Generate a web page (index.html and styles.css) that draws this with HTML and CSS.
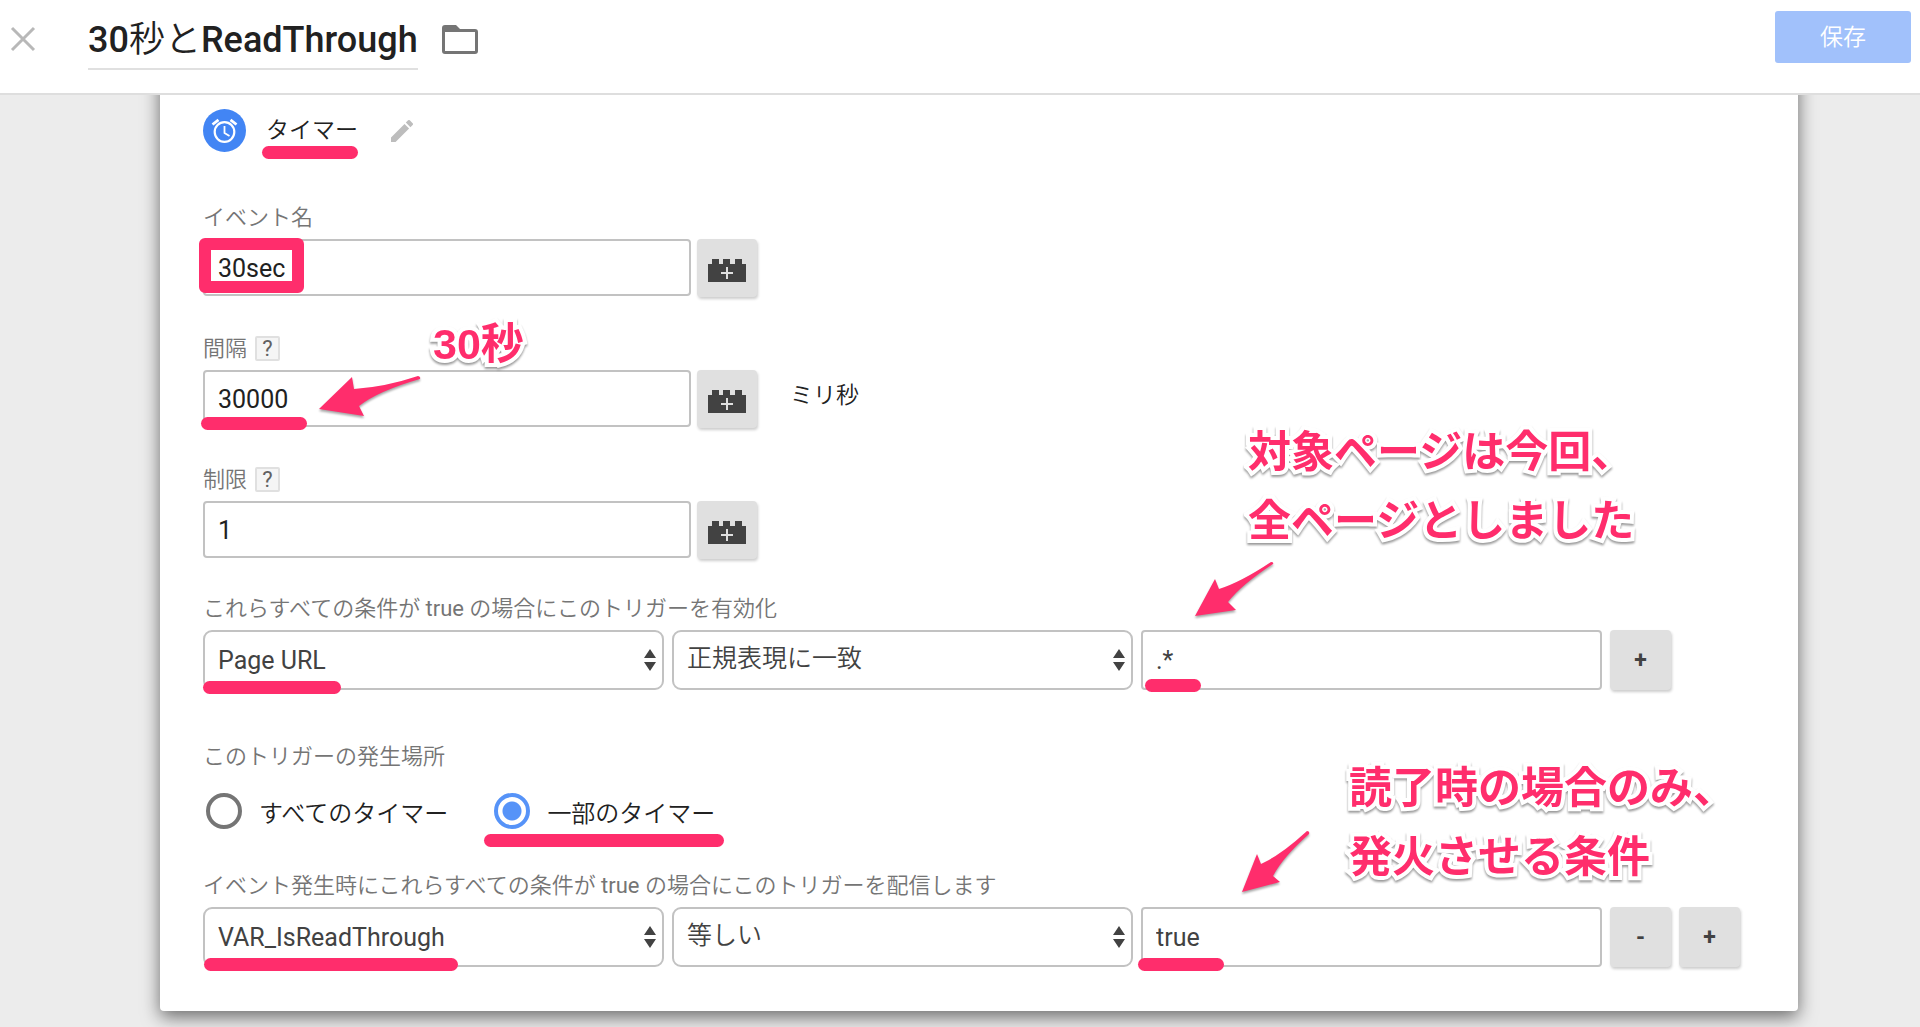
FILE: index.html
```html
<!DOCTYPE html>
<html lang="ja">
<head>
<meta charset="utf-8">
<meta name="viewport" content="width=device-width, initial-scale=1">
<title>30秒とReadThrough</title>
<link rel="stylesheet" href="styles.css">
</head>
<body>
<svg class="defs" aria-hidden="true">
  <symbol id="brick" viewBox="0 0 38 23"><path fill="#424242" d="M0 5h4V0h7v5h4V0h7v5h5V0h7v5h4v18H0z"/><path stroke="#e0e0e0" stroke-width="2" d="M19 8v12M13 14h12"/></symbol>
  <symbol id="updown" viewBox="0 0 12 22"><path fill="#424242" d="M6 0l6 9H0zM6 22l6-9H0z"/></symbol>
</svg>

<header class="topbar">
  <button class="icon-button close" type="button" aria-label="閉じる">
    <svg width="26" height="26" viewBox="0 0 26 26"><path d="M2 2l22 22M24 2L2 24" stroke="#b8b8b8" stroke-width="3" fill="none"/></svg>
  </button>
  <h1 class="title">30<span class="kana">秒と</span>ReadThrough</h1>
  <button class="icon-button" type="button" aria-label="フォルダ">
    <svg width="36" height="29" viewBox="0 0 36 29"><path fill="#757575" fill-rule="evenodd" d="M3 0h11l4 4h15a3 3 0 0 1 3 3v19a3 3 0 0 1-3 3H3a3 3 0 0 1-3-3V3a3 3 0 0 1 3-3zm0 7v19h30V7z"/></svg>
  </button>
  <button class="save" type="button">保存</button>
</header>

<main class="card">
  <div class="type">
    <svg width="43" height="43" viewBox="0 0 43 43" aria-hidden="true">
      <circle cx="21.500" cy="21.500" r="21.500" fill="#4285f4"/>
      <g fill="none" stroke="#fff"><circle cx="21.500" cy="23" r="9.800" stroke-width="2.200"/><path stroke-width="1.800" d="M21.500 17v7l5 3"/><path stroke-width="2.800" d="M9.500 15.500l6-4.700M33.500 15.500l-6-4.700"/></g>
    </svg>
    <span class="type-name">タイマー<i class="mark mark-type"></i></span>
    <button class="icon-button" type="button" aria-label="編集">
      <svg width="22" height="22" viewBox="3 3 18 18"><path fill="#bdbdbd" d="M3 17.250V21h3.750L17.810 9.940l-3.750-3.750L3 17.250zM20.710 7.040a1 1 0 0 0 0-1.410l-2.340-2.340a1 1 0 0 0-1.410 0l-1.830 1.830 3.750 3.750 1.830-1.830z"/></svg>
    </button>
  </div>

  <div class="fields">
    <div class="field">
      <div class="caption"><label for="event">イベント名</label></div>
      <div class="line">
        <input class="box" id="event" type="text" value="30sec">
        <button class="gray brick" type="button" aria-label="変数を挿入"><svg width="38" height="23"><use href="#brick"/></svg></button>
        <i class="frame"></i>
      </div>
    </div>

    <div class="field">
      <div class="caption"><label for="interval">間隔</label><button class="help" type="button">?</button></div>
      <div class="line">
        <input class="box" id="interval" type="text" value="30000">
        <button class="gray brick" type="button" aria-label="変数を挿入"><svg width="38" height="23"><use href="#brick"/></svg></button>
        <span class="unit">ミリ秒</span>
        <i class="mark mark-interval"></i>
        <svg class="arrow arrow-interval" width="106" height="46" viewBox="317 373 106 46" aria-hidden="true"><path d="M319 409L352 377L354 389Q385 387 418 376Q421 377 420 379Q378 391 359 406L364 416Z"/></svg>
        <strong class="note note-interval">30秒</strong>
      </div>
    </div>

    <div class="field">
      <div class="caption"><label for="limit">制限</label><button class="help" type="button">?</button></div>
      <div class="line">
        <input class="box" id="limit" type="text" value="1">
        <button class="gray brick" type="button" aria-label="変数を挿入"><svg width="38" height="23"><use href="#brick"/></svg></button>
      </div>
    </div>
  </div>

  <div class="caption"><span>これらすべての条件が <span class="latin">true</span> の場合にこのトリガーを有効化</span></div>
  <div class="rule">
    <div class="cell"><select class="box" aria-label="変数"><option>Page URL</option></select><svg class="updown"><use href="#updown"/></svg><i class="mark mark-url"></i></div>
    <div class="cell"><select class="box operator" aria-label="演算子"><option>正規表現に一致</option></select><svg class="updown"><use href="#updown"/></svg></div>
    <div class="cell">
      <input class="box" type="text" value=".*" aria-label="値">
      <i class="mark mark-regex"></i>
      <svg class="arrow arrow-regex" width="82" height="60" viewBox="1192 561 82 60" aria-hidden="true"><path d="M1194 617L1214 580L1218 590Q1240 583 1270 563Q1273 563 1272 565Q1240 586 1227 603L1235 611Z"/></svg>
      <strong class="note note-regex">対象ページは今回、<br>全ページとしました</strong>
    </div>
    <button class="gray" type="button">+</button>
  </div>

  <div class="caption where">このトリガーの発生場所</div>
  <div class="choices">
    <label class="choice"><input type="radio" name="where">すべてのタイマー</label>
    <label class="choice"><input type="radio" name="where" checked>一部のタイマー<i class="mark mark-choice"></i></label>
  </div>

  <div class="caption"><span>イベント発生時にこれらすべての条件が <span class="latin">true</span> の場合にこのトリガーを配信します</span></div>
  <div class="rule">
    <div class="cell"><select class="box" aria-label="変数"><option>VAR_IsReadThrough</option></select><svg class="updown"><use href="#updown"/></svg><i class="mark mark-var"></i></div>
    <div class="cell"><select class="box operator" aria-label="演算子"><option>等しい</option></select><svg class="updown"><use href="#updown"/></svg></div>
    <div class="cell">
      <input class="box" type="text" value="true" aria-label="値">
      <i class="mark mark-true"></i>
      <svg class="arrow arrow-true" width="72" height="66" viewBox="1240 829 72 66" aria-hidden="true"><path d="M1242 892L1257 854L1261 864Q1281 855 1307 831Q1310 831 1309 834Q1283 857 1273 876L1280 882Z"/></svg>
      <strong class="note note-true">読了時の場合のみ、<br>発火させる条件</strong>
    </div>
    <button class="gray" type="button">-</button>
    <button class="gray" type="button">+</button>
  </div>
</main>
</body>
</html>
```

FILE: styles.css
```css
* { box-sizing: border-box; }

body {
  margin: 0;
  background: #ececec;
  color: #212121;
  font-family: Roboto, "Noto Sans CJK JP", sans-serif;
  font-size: 23px;
}

button, input, select { font: inherit; color: inherit; margin: 0; }

.defs { position: absolute; width: 0; height: 0; }

.icon-button {
  display: flex;
  padding: 0;
  border: 0;
  background: none;
}

/* Top bar */
.topbar {
  position: relative;
  z-index: 1;
  display: flex;
  align-items: center;
  padding: 8px 9px 23px 10px;
  background: #fff;
  border-bottom: 2px solid #dedede;
}

.title {
  margin: 0 24px 0 52px;
  padding-top: 4px;
  border-bottom: 2px solid #e0e0e0;
  font-size: 36px;
  font-weight: 500;
  line-height: 56px;
  white-space: nowrap;
}

.kana { font-weight: 350; }

.save {
  align-self: flex-start;
  width: 136px;
  height: 52px;
  margin: 3px 0 0 auto;
  padding: 0 0 4px;
  border: 0;
  border-radius: 3px;
  background: #a1c1fb;
  color: #fff;
  font-weight: 350;
}

/* Card: its top edge is tucked under the top bar */
.card {
  margin: -30px 122px 16px 160px;
  padding: 44px 58px 44px 43px;
  background: #fff;
  border-radius: 4px;
  box-shadow: 0 6px 18px rgba(0, 0, 0, .55);
}

.type {
  display: flex;
  align-items: center;
  margin-bottom: 49px;
}

.type-name {
  position: relative;
  margin: 0 33px 0 20px;
  padding-bottom: 5px;
  font-weight: 350;
}

.caption {
  display: flex;
  align-items: center;
  gap: 8px;
  height: 30px;
  margin-bottom: 8px;
  padding-bottom: 3px;
  color: #757575;
  font-size: 22px;
  font-weight: 350;
  white-space: nowrap;
}

.latin { font-weight: 400; }

.help {
  width: 25px;
  height: 25px;
  margin-top: 6px;
  padding: 0;
  border: 2px solid #e0e0e0;
  border-radius: 2px;
  background: #f5f5f5;
  color: #616161;
  font-size: 22px;
  font-weight: 400;
  line-height: 22px;
}

.fields {
  display: grid;
  gap: 35px;
  margin-bottom: 33px;
}

.line {
  position: relative;
  display: flex;
  gap: 6px;
}

.box {
  width: 100%;
  height: 60px;
  padding: 0 13px;
  border: 2px solid #c2c2c2;
  border-radius: 4px;
  background: #fff;
  color: #424242;
  font-size: 25px;
}

.line .box {
  width: 488px;
  height: 57px;
  padding-top: 2px;
  color: #212121;
}

select.box {
  appearance: none;
  border-radius: 9px;
}

select.operator {
  padding-bottom: 4px;
  font-weight: 350;
}

.gray {
  height: 60px;
  padding: 0;
  border: 0;
  border-radius: 4px;
  background: #e0e0e0;
  box-shadow: 1px 2px 3px rgba(0, 0, 0, .2);
  color: #424242;
  font-weight: 700;
}

.brick {
  display: flex;
  align-items: center;
  justify-content: center;
  width: 60px;
  height: 58px;
  padding-top: 5px;
}

.unit {
  margin-left: 27px;
  line-height: 52px;
  font-weight: 350;
}

.rule {
  display: grid;
  grid-template-columns: repeat(3, 1fr) 61px 61px;
  gap: 8px;
}

.cell { position: relative; }

.updown {
  position: absolute;
  right: 8px;
  top: 19px;
  width: 12px;
  height: 22px;
  pointer-events: none;
}

.where { margin: 50px 0 23px; }

.choices {
  display: flex;
  gap: 46px;
  margin: 0 0 40px 3px;
}

.choice {
  position: relative;
  display: flex;
  align-items: center;
  gap: 17px;
  height: 36px;
  font-size: 24px;
  font-weight: 350;
}

.choice input {
  appearance: none;
  width: 36px;
  height: 36px;
  border: 4px solid #757575;
  border-radius: 50%;
}

.choice input:checked {
  border-color: #5693f8;
  background: radial-gradient(circle, #5693f8 9px, transparent 10px);
}

/* Hand-drawn style annotations laid over the form */
.mark {
  position: absolute;
  height: 13px;
  border-radius: 7px;
  background: #ff2d6c;
}

.mark-type { left: -4px; right: 0; top: 35px; }
.mark-interval { left: -2px; top: 47px; width: 106px; }
.mark-url { left: 0; top: 51px; width: 138px; }
.mark-regex { left: 4px; top: 49px; width: 56px; }
.mark-choice { left: -10px; right: -9px; top: 41px; }
.mark-var { left: 1px; top: 51px; width: 254px; }
.mark-true { left: -3px; top: 51px; width: 86px; }

.frame {
  position: absolute;
  left: -4px;
  top: -1px;
  width: 105px;
  height: 55px;
  border: 12px solid #ff2d6c;
  border-radius: 6px;
}

.arrow {
  position: absolute;
  fill: #ff2d6c;
  filter: drop-shadow(0 2px 1px rgba(0, 0, 0, .35));
  overflow: visible;
}

.arrow-interval { left: 114px; top: 3px; }
.arrow-regex { left: 52px; top: -70px; }
.arrow-true { left: 99px; top: -78px; }

.note {
  position: absolute;
  color: #ff2d6c;
  font-family: "Liberation Sans", "Noto Sans CJK JP", sans-serif;
  font-size: 43px;
  font-weight: 700;
  line-height: 69px;
  white-space: nowrap;
  -webkit-text-stroke: 8px #fff;
  paint-order: stroke fill;
  filter: drop-shadow(0 2px 1px rgba(0, 0, 0, .4));
}

.note-interval { left: 230px; top: -60px; }
.note-regex { left: 107px; top: -212px; }
.note-true { left: 208px; top: -153px; }
```
